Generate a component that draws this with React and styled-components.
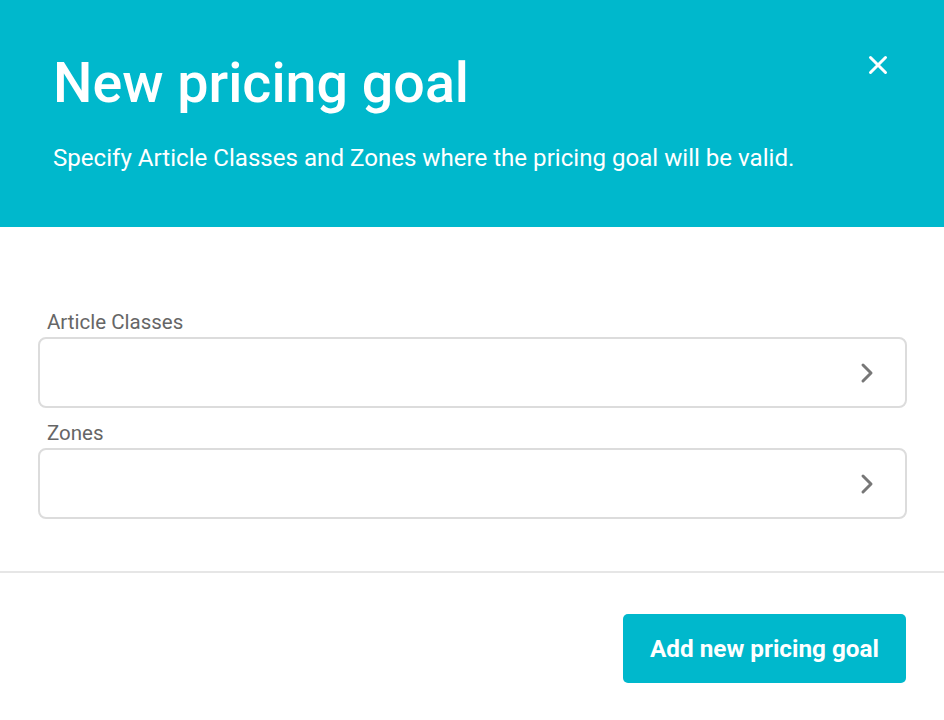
import React from "react"
import styled, { createGlobalStyle } from "styled-components"

const teal = "#00b8cc"

const GlobalStyle = createGlobalStyle`
  html, body {
    margin: 0;
    padding: 0;
    background: #fff;
  }
  body {
    font-family: Roboto, "Liberation Sans", sans-serif;
  }
`

const Dialog = styled.div`
  width: 944px;
  height: 720px;
  display: flex;
  flex-direction: column;
  background: #fff;
  overflow: hidden;
`

const Header = styled.header`
  position: relative;
  height: 227px;
  box-sizing: border-box;
  background: ${teal};
  color: #fff;
  padding: 49px 54px 0 53px;
`

const Title = styled.h1`
  margin: 0;
  font-size: 55.6px;
  font-weight: 500;
  line-height: 68px;
`

const Subtitle = styled.p`
  margin: 26px 0 0 0;
  font-size: 24.1px;
  line-height: 30px;
  font-weight: 400;
`

const CloseButton = styled.button`
  position: absolute;
  top: 52px;
  right: 53px;
  width: 26px;
  height: 26px;
  padding: 0;
  border: none;
  background: transparent;
  display: flex;
  align-items: center;
  justify-content: center;
  cursor: pointer;
`

const Body = styled.div`
  height: 346px;
  box-sizing: border-box;
  padding: 83px 37px 0 38px;
  display: flex;
  flex-direction: column;
  gap: 13px;
  border-bottom: 2px solid #e6e6e6;
`

const Field = styled.div`
  display: flex;
  flex-direction: column;
`

const Label = styled.label`
  padding-left: 9px;
  font-size: 20.5px;
  line-height: 24px;
  color: #666;
  margin-bottom: 3px;
`

const Select = styled.div`
  height: 71px;
  box-sizing: border-box;
  border: 2px solid #dcdcdc;
  border-radius: 8px;
  display: flex;
  align-items: center;
  justify-content: flex-end;
  padding-right: 31px;
`

const Footer = styled.footer`
  flex: 1;
  display: flex;
  justify-content: flex-end;
  align-items: flex-start;
  padding: 41px 38px 0 0;
`

const PrimaryButton = styled.button`
  width: 283px;
  height: 69px;
  border: none;
  border-radius: 5px;
  background: ${teal};
  color: #fff;
  font-family: Roboto, "Liberation Sans", sans-serif;
  font-size: 24.3px;
  font-weight: 700;
  cursor: pointer;
`

const Chevron = () => (
  <svg width="14" height="22" viewBox="0 0 14 22" fill="none">
    <path d="M3 3l8 8-8 8" stroke="#777" strokeWidth="3" strokeLinecap="round" strokeLinejoin="round" />
  </svg>
)

const CloseIcon = () => (
  <svg width="20" height="20" viewBox="0 0 20 20" fill="none">
    <path d="M2.5 2.5l15 15M17.5 2.5l-15 15" stroke="#fff" strokeWidth="3" strokeLinecap="round" />
  </svg>
)

const fields = ["Article Classes", "Zones"]

export default function App() {
  return (
    <>
      <GlobalStyle />
      <Dialog>
        <Header>
          <Title>New pricing goal</Title>
          <Subtitle>Specify Article Classes and Zones where the pricing goal will be valid.</Subtitle>
          <CloseButton aria-label="Close">
            <CloseIcon />
          </CloseButton>
        </Header>
        <Body>
          {fields.map((label) => (
            <Field key={label}>
              <Label>{label}</Label>
              <Select>
                <Chevron />
              </Select>
            </Field>
          ))}
        </Body>
        <Footer>
          <PrimaryButton>Add new pricing goal</PrimaryButton>
        </Footer>
      </Dialog>
    </>
  )
}
